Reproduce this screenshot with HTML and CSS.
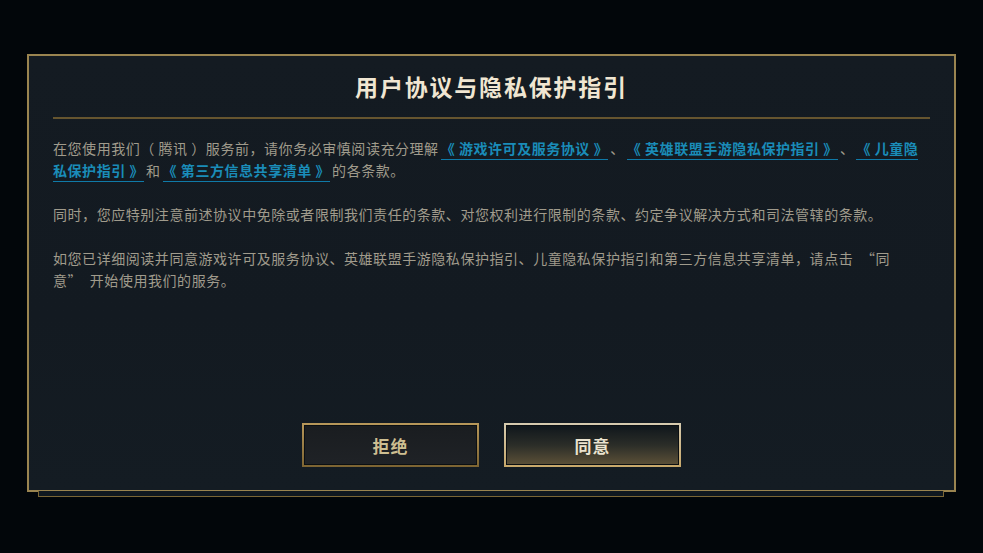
FILE: index.html
```html
<!DOCTYPE html>
<html lang="zh-CN">
<head>
<meta charset="utf-8">
<title>用户协议与隐私保护指引</title>
<link rel="stylesheet" href="styles.css">
</head>
<body>
<div class="stage">
  <div class="dialog">
    <div class="header">
      <h1 class="title">用户协议与隐私保护指引</h1>
    </div>
    <div class="content">
      <p class="para">在您使用我们（ 腾讯 ）服务前，请你务必审慎阅读充分理解<a class="link">《 游戏许可及服务协议 》</a>、<a class="link">《 英雄联盟手游隐私保护指引 》</a>、<a class="link">《 儿童隐私保护指引 》</a>和<a class="link">《 第三方信息共享清单 》</a>的各条款。</p>
      <p class="para">同时，您应特别注意前述协议中免除或者限制我们责任的条款、对您权利进行限制的条款、约定争议解决方式和司法管辖的条款。</p>
      <p class="para">如您已详细阅读并同意游戏许可及服务协议、英雄联盟手游隐私保护指引、儿童隐私保护指引和第三方信息共享清单，请点击 <span class="q-open">“</span>同意<span class="q-close">”</span> 开始使用我们的服务。</p>
    </div>
    <div class="actions">
      <button class="btn btn-decline"><span class="btn-inner">拒绝</span></button>
      <button class="btn btn-accept"><span class="btn-inner">同意</span></button>
    </div>
  </div>
  <div class="tray"></div>
</div>
</body>
</html>
```

FILE: styles.css
```css
html, body {
  margin: 0;
  padding: 0;
  background: #02060a;
  width: 983px;
  height: 553px;
  overflow: hidden;
  font-family: "Noto Sans CJK SC", "Noto Sans", sans-serif;
}

.stage {
  padding-top: 54px;
  padding-left: 27px;
}

.dialog {
  box-sizing: border-box;
  width: 929px;
  height: 438px;
  border: 2px solid #9a8450;
  background: linear-gradient(180deg, #141b22 0%, #131a21 60%, #141c23 100%);
  display: flex;
  flex-direction: column;
  padding: 0 24px 0 24px;
}

.header {
  height: 61px;
  display: flex;
  align-items: center;
  justify-content: center;
  border-bottom: 2px solid #66552f;
}

.title {
  margin: 0;
  font-size: 23px;
  font-weight: 700;
  letter-spacing: 1.8px;
  color: #f0e6d2;
  line-height: 1;
}

.content {
  padding-top: 18px;
  padding-right: 10px;
}

.para {
  margin: 0 0 22px 0;
  font-size: 14px;
  line-height: 22px;
  letter-spacing: 0.55px;
  color: #a09b8c;
  text-spacing-trim: space-all;
}

.q-open {
  padding-left: 4px;
}

.q-close {
  padding-right: 4px;
}

.link {
  color: #1a8cb8;
  font-weight: 700;
  margin: 0 2px;
  padding-bottom: 1px;
  border-bottom: 1px solid #0f7aa8;
}

.actions {
  margin-top: auto;
  margin-bottom: 23px;
  display: flex;
  justify-content: center;
  gap: 25px;
}

.btn {
  box-sizing: border-box;
  width: 177px;
  height: 44px;
  padding: 2px;
  border: none;
  font-family: "Noto Sans CJK SC", sans-serif;
  font-size: 17px;
  font-weight: 700;
  letter-spacing: 1px;
  cursor: pointer;
}

.btn-inner {
  box-sizing: border-box;
  display: flex;
  align-items: center;
  justify-content: center;
  width: 100%;
  height: 100%;
  border: 1px solid #0b0f12;
}

.btn-decline {
  background: linear-gradient(180deg, #b8985a 0%, #7d6432 100%);
  color: #cdbe91;
}

.btn-decline .btn-inner {
  background: linear-gradient(180deg, #1a1d20 0%, #1f2226 100%);
}

.btn-accept {
  background: linear-gradient(180deg, #d6cbb0 0%, #c8a86a 100%);
  color: #ebe3cf;
}

.btn-accept .btn-inner {
  background: linear-gradient(180deg, #10171c 0%, #2b2d28 50%, #5a4f37 100%);
}

.tray {
  box-sizing: border-box;
  width: 906px;
  height: 6px;
  margin-left: 11px;
  margin-top: -1px;
  border: 1px solid #7a6535;
  border-top: none;
  background: #101820;
}
```
